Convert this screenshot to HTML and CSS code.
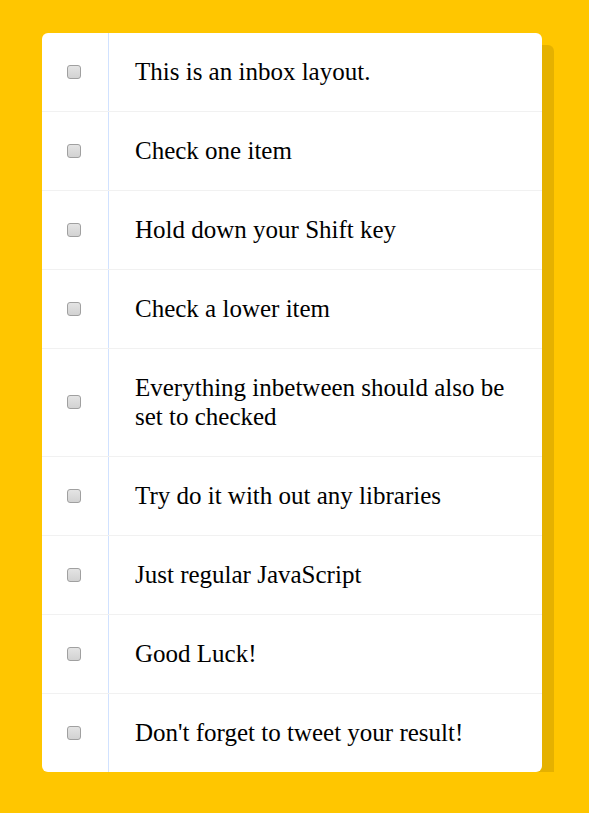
FILE: index.html
```html
<!DOCTYPE html>
<html>
<head>
<meta charset="utf-8">
<link rel="stylesheet" href="styles.css">
</head>
<body>
<div class="inbox">
  <div class="item"><input type="checkbox" class="check"><p class="label">This is an inbox layout.</p></div>
  <div class="item"><input type="checkbox" class="check"><p class="label">Check one item</p></div>
  <div class="item"><input type="checkbox" class="check"><p class="label">Hold down your Shift key</p></div>
  <div class="item"><input type="checkbox" class="check"><p class="label">Check a lower item</p></div>
  <div class="item"><input type="checkbox" class="check"><p class="label">Everything inbetween should also be set to checked</p></div>
  <div class="item"><input type="checkbox" class="check"><p class="label">Try do it with out any libraries</p></div>
  <div class="item"><input type="checkbox" class="check"><p class="label">Just regular JavaScript</p></div>
  <div class="item"><input type="checkbox" class="check"><p class="label">Good Luck!</p></div>
  <div class="item"><input type="checkbox" class="check"><p class="label">Don't forget to tweet your result!</p></div>
</div>
</body>
</html>
```
FILE: styles.css
```css
html {
  background: #ffc600;
}
body {
  margin: 0;
  padding: 33px 0 0 42px;
  font-family: "Liberation Serif", "Times New Roman", serif;
}
.inbox {
  width: 500px;
  background: #ffffff;
  border-radius: 6px;
  box-shadow: 12px 12px 0 rgba(0, 0, 0, 0.1);
}
.item {
  display: flex;
  align-items: center;
  border-bottom: 1px solid #f1f1f1;
}
.item:last-child {
  border-bottom: 0;
}
.check {
  -webkit-appearance: none;
  appearance: none;
  box-sizing: border-box;
  width: 14px;
  height: 14px;
  margin: 0 27px 0 25px;
  flex: none;
  border: 1px solid #a0a0a0;
  border-radius: 3px;
  background: linear-gradient(#e4e4e4, #d2d2d2);
}
.label {
  margin: 0;
  flex: 1;
  padding: 25.25px 25px 24.25px 26px;
  font-size: 25px;
  line-height: 28.5px;
  color: #000;
  border-left: 1px solid #d1e2ff;
}
```
